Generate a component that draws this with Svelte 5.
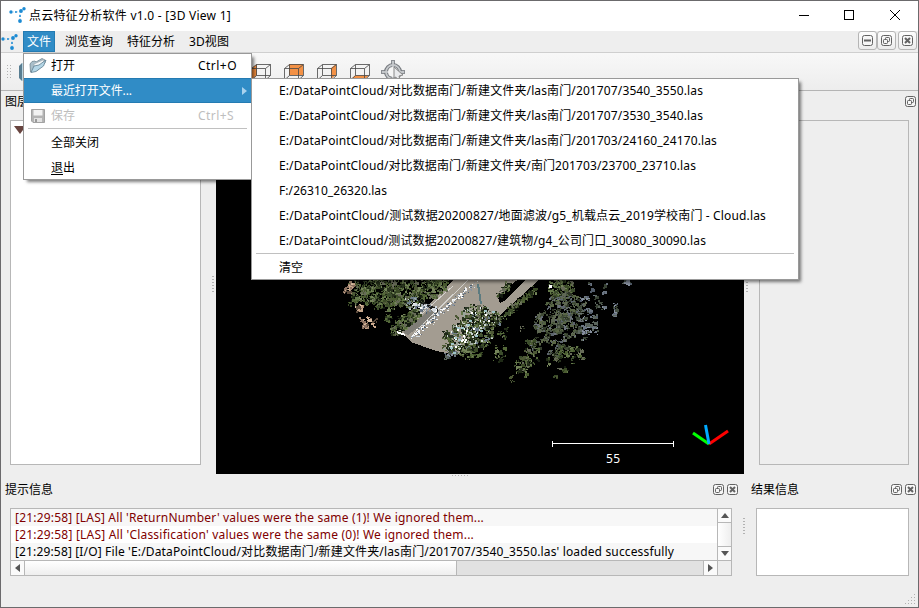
<script>
  const recent = [
    ['E:/DataPointCloud/对比数据南门/新建文件夹/las南门/201707/3540_3550.las', 424],
    ['E:/DataPointCloud/对比数据南门/新建文件夹/las南门/201707/3530_3540.las', 424],
    ['E:/DataPointCloud/对比数据南门/新建文件夹/las南门/201703/24160_24170.las', 438],
    ['E:/DataPointCloud/对比数据南门/新建文件夹/南门201703/23700_23710.las', 417],
    ['F:/26310_26320.las', 108],
    ['E:/DataPointCloud/测试数据20200827/地面滤波/g5_机载点云_2019学校南门 - Cloud.las', 487],
    ['E:/DataPointCloud/测试数据20200827/建筑物/g4_公司门口_30080_30090.las', 427]
  ];
  const logs = [
    ["[21:29:58] [LAS] All 'ReturnNumber' values were the same (1)! We ignored them...", 469, true],
    ["[21:29:58] [LAS] All 'Classification' values were the same (0)! We ignored them...", 459, true],
    ["[21:29:58] [I/O] File 'E:/DataPointCloud/对比数据南门/新建文件夹/las南门/201707/3540_3550.las' loaded successfully", 659, false]
  ];

  // Spreads a label's letters so that it takes the given width.
  function fit(node, width) {
    const n = [...node.textContent].length;
    const w = node.getBoundingClientRect().width;
    node.style.letterSpacing = (width - w) / n + 'px';
  }

  let seed = 41;
  const rnd = () => ((seed = (seed * 16807) % 2147483647) / 2147483647);
  const leaf = ['#3a4a26', '#4a5c30', '#55693a', '#1f2a16', '#64784a', '#28331d', '#74845a', '#3c4d2c', '#141c10', '#666a58', '#4d5836'];
  const town = [...leaf, '#9aa59a', '#c9d3cf', '#6f7f8c', '#2a3526', '#11180e'];
  const dusty = ['#414c36', '#505f40', '#5f6854', '#5c646c', '#333c2c', '#485148', '#5a6646', '#6c727a', '#424e38', '#2c3424'];
  const bluish = ['#525c6a', '#6c7682', '#444e42', '#5b655d', '#868f9e', '#384234'];
  const tan = ['#c9a88c', '#a88b74', '#dcc0a4', '#8a7060', '#5a4a3c'];
  const cars = ['#ffffff', '#f2f4f6', '#8a94a0', '#667280', '#d5dbe0', '#a0a8ae', '#4f6070'];
  // cx, cy, rx, ry, tilt, tuft count, palette
  const clumps = [
    [372, 289, 24, 15, 0, 95, leaf], [348, 286, 4, 7, 0.4, 14, tan],
    [386, 300, 18, 9, 0, 45, leaf], [400, 289, 20, 12, 0, 70, leaf],
    [430, 285, 19, 12, -0.35, 90, leaf], [408, 301, 17, 6, 0.2, 36, town],
    [358, 307, 2, 7, 0, 9, tan], [366, 321, 9, 4, 0, 11, tan],
    [387, 318, 3, 5, 0.5, 5, leaf], [352, 299, 6, 4, 0, 9, leaf],
    [404, 321, 18, 6, -0.7, 65, leaf], [424, 306, 12, 3, 0.3, 12, cars],
    [472, 315, 16, 11, 0, 70, town], [459, 337, 19, 14, -0.5, 90, town],
    [478, 333, 17, 14, -0.8, 75, town], [488, 320, 13, 8, -0.7, 40, town],
    [470, 352, 12, 5, 0, 20, leaf], [450, 354, 6, 3, 0, 9, bluish],
    [515, 304, 25, 2, -0.72, 45, leaf], [504, 288, 9, 2, -0.8, 14, leaf],
    [559, 287, 13, 11, 0, 60, leaf], [564, 303, 20, 11, 0.2, 65, dusty],
    [550, 322, 18, 12, 0, 65, dusty], [568, 323, 14, 14, 0, 35, dusty],
    [550, 345, 21, 10, 0.2, 38, dusty], [567, 352, 14, 9, 0, 16, leaf],
    [585, 324, 15, 14, 0, 22, bluish], [590, 307, 13, 12, 0, 17, bluish],
    [530, 346, 6, 7, 0, 13, leaf], [521, 364, 7, 8, 0, 22, leaf],
    [540, 358, 20, 6, 0, 12, leaf], [508, 332, 14, 9, 0, 6, leaf],
    [495, 353, 12, 9, 0, 7, leaf], [614, 309, 1, 8, 0, 7, bluish],
    [626, 281, 4, 3, 0, 7, bluish], [575, 352, 12, 6, 0, 7, leaf],
    [525, 376, 30, 4, 0, 4, leaf], [560, 369, 5, 2, 0, 3, leaf],
    [596, 288, 14, 8, 0, 4, bluish]
  ];
  const cells = [];
  const pick = (list) => list[Math.floor(rnd() * list.length)];
  for (const [cx, cy, rx, ry, tilt, count, palette] of clumps) {
    for (let i = 0; i < count; i++) {
      const a = rnd() * Math.PI * 2;
      const r = Math.sqrt(rnd());
      const u = Math.cos(a) * r * rx;
      const v = Math.sin(a) * r * ry;
      const x = cx + u * Math.cos(tilt) - v * Math.sin(tilt);
      const y = cy + u * Math.sin(tilt) + v * Math.cos(tilt);
      const main = pick(palette);
      const size = 2 + Math.floor(rnd() * 3);
      // Each tuft is a small patch of one tone with flecks of the others.
      cells.push({ x: Math.round(x), y: Math.round(y), w: size, h: size - 1, c: main });
      for (let k = 0; k < 4; k++) {
        cells.push({
          x: Math.round(x + (rnd() - 0.4) * 5), y: Math.round(y + (rnd() - 0.4) * 5),
          w: 1 + Math.floor(rnd() * 2), h: 1 + Math.floor(rnd() * 2),
          c: rnd() > 0.5 ? main : pick(palette)
        });
      }
    }
  }
  // Bright specks where roofs and cars show between the trees.
  for (let i = 0; i < 40; i++) {
    const t = rnd();
    cells.push({ x: Math.round(446 + t * 40 + rnd() * 8), y: Math.round(342 - t * 30 + (rnd() - 0.5) * 24), w: 1 + (i % 3), h: 2, c: ['#e6f6f4', '#ffffff', '#9fc4c8'][i % 3] });
  }
  // Parked cars along the road.
  for (let i = 0; i < 150; i++) {
    const t = rnd();
    cells.push({ x: Math.round(409 + t * 63 + rnd() * 6), y: Math.round(333 - t * 53 + rnd() * 6), w: 1 + Math.floor(rnd() * 2), h: 1, c: cars[i % cars.length] });
  }
</script>

{#snippet logo()}
  <svg width="17" height="16" viewBox="0 0 17 16">
    <path d="M2 5L8 5L12 4L15 2M11 5V14" stroke="#b9daf0" stroke-width="1" stroke-dasharray="1 1" fill="none" />
    <g fill="#1b8ad3"><circle cx="2" cy="5" r="1.7" /><circle cx="7" cy="5" r="1" /><circle cx="12" cy="4" r="1.9" /><circle cx="15" cy="1.8" r="1.7" /><circle cx="11" cy="9" r="1" /><circle cx="11" cy="14" r="1.9" /></g>
  </svg>
{/snippet}

{#snippet glyph(kind)}
  <svg width="11" height="11" viewBox="0 0 11 11" fill="none" stroke="#626262">
    <rect x=".5" y=".5" width="10" height="10" rx="2" fill="#f6f6f6" />
    {#if kind === 'min'}
      <path d="M2 5.5H9" stroke-width="2" />
    {:else if kind === 'float'}
      <rect x="4.5" y="2.5" width="4" height="4" rx=".8" /><rect x="2.5" y="4.5" width="4" height="4" rx=".8" fill="#f6f6f6" />
    {:else}
      <path d="M3 3L8 8M8 3L3 8" stroke-width="2" />
    {/if}
  </svg>
{/snippet}

{#snippet cube(face)}
  <svg width="20" height="17" viewBox="0 0 20 17">
    {#if face === 'left'}<path d="M1 5L6 1V12L1 16Z" fill="#ec8a3c" />{/if}
    {#if face === 'back'}<path d="M5 1H19V12H5Z" fill="#f39145" />{/if}
    {#if face === 'right'}<path d="M14 5L19 1V12L14 16Z" fill="#f39145" />{/if}
    {#if face === 'bottom'}<path d="M1 16L5 12.5H19L15 16Z" fill="#f39145" />{/if}
    <path d="M.5 5.5H14.5V17M.5 5.5V17M.5 5.5L5.5 1.5H19.5L14.5 5.5M5.5 1.5V12.5H19.5V1.5M5.5 12.5L.5 17M19.5 12.5L14.5 17" fill="none" stroke="#464646" stroke-width=".8" />
  </svg>
{/snippet}

<div class="window">
  <header class="title">
    {@render logo()}
    <span class="name"><span use:fit={202}>点云特征分析软件 v1.0 - [3D View 1]</span></span>
    <svg class="controls" width="106" height="12" viewBox="0 0 106 12" fill="none" stroke="#000">
      <path d="M0 6.5H10" /><rect x="45.5" y="1.5" width="9" height="9" /><path d="M91 1L101 11M101 1L91 11" />
    </svg>
  </header>

  <nav class="menubar">
    <div class="sublogo">{@render logo()}</div>
    <span class="entry open">文件</span><span class="entry">浏览查询</span><span class="entry">特征分析</span><span class="entry"><span use:fit={40}>3D视图</span></span>
    <div class="mdi">
      <button>{@render glyph('min')}</button><button>{@render glyph('float')}</button><button class="last">{@render glyph('close')}</button>
    </div>
  </nav>

  <div class="toolbar">
    <i class="grip"></i>
    <svg class="folder" width="20" height="20" viewBox="0 0 20 20"><path d="M1 4L4 1V19L1 16Z" fill="#587d91" /><path d="M4 1H20V19H4Z" fill="#b8d3df" /></svg>
    <div class="cubes">
      {@render cube('left')}{@render cube('back')}{@render cube('right')}{@render cube('bottom')}
      <svg width="24" height="22" viewBox="0 0 24 22" fill="none">
        <path d="M12 0V22M0 12H24" stroke="#8b8e93" stroke-width="4" /><circle cx="12" cy="12" r="7" stroke="#73777c" stroke-width="4" />
        <path d="M12 1V21M1 12H23" stroke="#d8dadd" stroke-width="1.5" /><circle cx="12" cy="12" r="7" stroke="#c6c9cc" stroke-width="1.8" /><circle cx="12" cy="12" r="5" fill="#f5f5f5" />
        <path d="M13 7L22 15L18 16L19 20H16L15 17L13 18Z" fill="#e9eaec" stroke="#888" />
      </svg>
    </div>
  </div>

  <div class="main">
    <section class="left">
      <div class="cap">图层</div>
      <div class="tree"><svg width="12" height="9" viewBox="0 0 12 9"><path d="M0 0H12L6 8Z" fill="#68443f" /></svg></div>
    </section>
    <i class="split"></i>
    <svg class="view" width="528" height="382" viewBox="216 92 528 382">
      <rect x="216" y="92" width="528" height="382" fill="#000" />
      <g shape-rendering="crispEdges">
        <path d="M456 278L401 332L411 342L436 351L458 355L486 322L514 292L534 278Z" fill="#a39c91" />
        <path d="M434 306L403 332L408 335L440 312Z" fill="#807e78" />
        <path d="M498 297L512 284L520 278H531L514 296L500 303Z" fill="#000" />
        <path d="M541 278H528L492 313L499 316Z" fill="#a29c91" />
        <path d="M453 286L407 327M468 280L414 333M424 310L398 332" stroke="#d4d3cf" fill="none" />
        <path d="M467 289L436 316L411 338" stroke="#f5f5f5" stroke-width="2" stroke-dasharray="5 2" fill="none" />
        <path d="M478 284L481 304" stroke="#5c7b80" stroke-width="2" />
        <path d="M419 301L438 311" stroke="#1a1a18" stroke-width="3" />
        {#each cells as p}<rect x={p.x} y={p.y} width={p.w} height={p.h} fill={p.c} />{/each}
        <path d="M397 331L405 334V336L397 333Z" fill="#fff" /><rect x="549" y="285" width="3" height="3" fill="#fff" />
        <path d="M552.5 441V447M673.5 441V447M552 443.500H674" stroke="#fff" />
      </g>
      <text x="606" y="463" textLength="14" fill="#fff" font-size="12">55</text>
      <g fill="none" stroke-width="3"><path d="M693 433L709 444" stroke="#0f0" /><path d="M709 444L728 431" stroke="#f00" /><path d="M705.500 425L709 444" stroke="#0af" /></g>
    </svg>
    <i class="split"></i>
    <section class="right">
      <div class="cap"><span class="icons">{@render glyph('float')}</span></div>
      <div class="panel"></div>
    </section>
  </div>

  <i class="hsplit"></i>

  <div class="bottom">
    <section class="tips">
      <div class="cap">提示信息<span class="icons">{@render glyph('float')}{@render glyph('close')}</span></div>
      <div class="console">
        <div class="body">
          <div class="lines">
            {#each logs as [text, w, warn]}<div class="line" class:warn><span use:fit={w}>{text}</span></div>{/each}
          </div>
          <div class="vbar">
            <b><svg width="8" height="5"><path d="M4 0L8 5H0Z" fill="#555" /></svg></b><b class="thumb"></b><b><svg width="8" height="5"><path d="M0 0H8L4 5Z" fill="#555" /></svg></b>
          </div>
        </div>
        <div class="hbar">
          <b><svg width="5" height="8"><path d="M5 0V8L0 4Z" fill="#555" /></svg></b><b class="thumb"></b><b class="track"></b><b><svg width="5" height="8"><path d="M0 0V8L5 4Z" fill="#555" /></svg></b><b class="corner"></b>
        </div>
      </div>
    </section>
    <i class="split"></i>
    <section class="result">
      <div class="cap">结果信息<span class="icons">{@render glyph('float')}{@render glyph('close')}</span></div>
      <div class="box"></div>
    </section>
  </div>
  <svg class="sizegrip" width="11" height="11"><g fill="#b0b0b0">{#each [0, 1, 2, 3] as r}{#each [0, 1, 2, 3] as c}{#if r + c > 2}<rect x={c * 3} y={r * 3} width="1" height="1" />{/if}{/each}{/each}</g></svg>

  <div class="menu file">
    <div class="item">
      <svg width="18" height="18" viewBox="0 0 18 18"><path d="M1.500 15L1 7L3 4.500L6 4L7 5L13 1.500L16 3V6L9 13Z" fill="#a9bfca" stroke="#71858f" stroke-width=".8" /><path d="M5 7L15 2.500L14 7L5 13Z" fill="#f4f7f8" stroke="#9aa5aa" stroke-width=".6" /><path d="M2 15.500L5 9L10 8L17 3L14.500 9L7 14.500Z" fill="#b4d6e6" stroke="#5f7f90" stroke-width=".8" /></svg>
      <span>打开</span><em><span use:fit={39}>Ctrl+O</span></em>
    </div>
    <div class="item hot"><span use:fit={81}>最近打开文件...</span><svg class="arrow" width="5" height="8"><path d="M0 0L5 4L0 8Z" fill="#a9d2ee" /></svg></div>
    <div class="item off">
      <svg width="18" height="18" viewBox="0 0 18 18"><path d="M2.500 2.500H15.500V15.500H4L2.500 14Z" fill="#b4b4b4" stroke="#a2a2a2" /><path d="M4.500 3H13.500V8.500H4.500Z" fill="#f2f2f2" /><path d="M5 11H13V15H5Z" fill="#e2e2e2" /><path d="M6 12H8V15H6Z" fill="#999" /></svg>
      <span>保存</span><em><span use:fit={36}>Ctrl+S</span></em>
    </div>
    <hr />
    <div class="item"><span>全部关闭</span></div>
    <div class="item"><span><u>退</u>出</span></div>
  </div>

  <div class="menu recent">
    {#each recent as [path, w]}<div class="item"><span use:fit={w}>{path}</span></div>{/each}
    <hr />
    <div class="item"><span>清空</span></div>
  </div>
</div>

<style>
  :global(body) { margin: 0; }
  .window, .window * { box-sizing: border-box; }
  .window { position: relative; width: 919px; height: 608px; border: 1px solid #6b6a6c; background: #eee; display: flex; flex-direction: column; overflow: hidden; font: 12px/16px "Noto Sans", "Noto Sans CJK SC", sans-serif; color: #000; white-space: nowrap; }
  svg { display: block; flex: none; }
  .title { height: 30px; flex: none; background: #fff; display: flex; align-items: center; padding: 0 13px 2px 8px; }
  .name { margin-left: 3px; padding-top: 2px; }
  .controls { margin-left: auto; }
  .menubar { height: 22px; flex: none; display: flex; border-bottom: 1px solid #cfcfcf; }
  .sublogo { width: 22px; height: 21px; display: flex; align-items: center; overflow: hidden; }
  .entry { height: 21px; line-height: 21px; padding: 0 4px; margin-right: 6px; }
  .open { background: #308cc6; color: #fff; border: 1px solid #247bb2; line-height: 19px; padding: 0 3px; }
  .mdi { margin-left: auto; display: flex; padding-right: 1px; }
  button { width: 19px; height: 19px; padding: 0; display: grid; place-items: center; border: 1px solid #b5b5b5; border-radius: 3px; background: linear-gradient(#fdfdfd, #ececec); }
  .last { margin-left: 2px; }
  .toolbar { height: 38px; flex: none; display: flex; align-items: center; background: linear-gradient(#f8f8f8, #ededed); border-bottom: 1px solid #b4b4b4; padding-left: 5px; }
  .grip { width: 5px; height: 16px; background: radial-gradient(circle, #b2b2b2 .8px, transparent 1px) 0 0 / 3px 3px; }
  .folder { margin-left: 7px; }
  .cubes { display: flex; gap: 13px; margin: 0 0 1px 213px; align-items: center; }
  .cubes > :global(svg:last-child) { margin-left: -2px; }
  .main { height: 383px; flex: none; display: flex; padding-top: 1px; }
  .left { width: 209px; padding: 0 9px 9px; display: flex; flex-direction: column; }
  .cap { height: 28px; flex: none; line-height: 19px; display: flex; margin-left: -5px; }
  .tree { flex: 1; border: 1px solid #b7b7b7; background: #fff; padding: 5px 3px; }
  .split { width: 6px; flex: none; align-self: center; height: 17px; background: radial-gradient(circle, #b2b2b2 .7px, transparent 1px) 0 0 / 6px 3px; }
  .right { flex: 1; padding: 0 9px 9px; display: flex; flex-direction: column; }
  .right .cap { margin-right: -7px; }
  .icons { margin-left: auto; display: flex; gap: 3px; padding-top: 4px; }
  .panel { flex: 1; border: 1px solid #b7b7b7; }
  .hsplit { height: 5px; width: 18px; flex: none; margin-left: 450px; background: radial-gradient(circle, #b2b2b2 .7px, transparent 1px) 0 -1px / 3px 5px; }
  .bottom { display: flex; height: 97px; flex: none; }
  .tips { width: 740px; padding: 0 9px; }
  .bottom .cap { height: 29px; line-height: 22px; }
  .bottom .icons { padding-top: 5px; }
  .tips .cap { margin-right: -8px; }
  .console { width: 722px; border: 1px solid #b7b7b7; }
  .body { display: flex; height: 51px; }
  .lines { flex: 1; min-width: 0; overflow: hidden; }
  .line { height: 17px; line-height: 17px; background: #f7f7f7; padding-left: 4px; }
  .line:nth-child(2) { background: #fff; }
  .warn { color: #800000; }
  .vbar { width: 14px; border-left: 1px solid #b7b7b7; display: flex; flex-direction: column; }
  b { display: grid; place-items: center; background: #fafafa; height: 13px; }
  .vbar .thumb { flex: 1; border: solid #b7b7b7; border-width: 1px 0; background: linear-gradient(90deg, #fff, #eee); }
  .hbar { display: flex; border-top: 1px solid #b7b7b7; height: 15px; }
  .hbar b { width: 14px; height: 14px; border-right: 1px solid #b7b7b7; }
  .hbar .thumb { width: 432px; background: linear-gradient(#fff, #eee); }
  .hbar .track { flex: 1; background: #e1e1e1; }
  .hbar .corner { background: #eee; border-right: 0; width: 13px; }
  .bottom .split { margin-top: -5px; }
  .tips .icons { margin-right: 2px; }
  .result { flex: 1; padding: 0 9px; }
  .result .cap { margin-right: -7px; }
  .box { height: 68px; border: 1px solid #b7b7b7; background: #fff; }
  .sizegrip { position: absolute; right: 2px; bottom: 2px; }
  .menu { position: absolute; background: #fff; border: 1px solid #999; box-shadow: 3px 3px 3px -1px rgba(0, 0, 0, .5); }
  .file { left: 22px; top: 52px; width: 229px; height: 127px; }
  .recent { left: 250px; top: 77px; width: 548px; height: 202px; }
  .item { height: 25px; display: flex; align-items: center; padding: 0 14px 0 27px; }
  .menu > .item:first-child { height: 24px; }
  .recent > .item:first-child { padding-bottom: 1px; }
  .item > svg:first-child { width: 18px; margin: 0 4px 0 -22px; }
  .item em { font-style: normal; margin-left: auto; width: 39px; }
  .hot { background: #308cc6; color: #fff; border: solid #247bb2; border-width: 1px 0; }
  .arrow { margin: 0 -10px 0 auto; }
  .off { color: #bebebe; }
  hr { margin: 0 4px; border: 0; border-top: 1px solid #c0c0c0; }
  hr + .item { margin-top: 1px; }
  u { text-underline-offset: 2px; }
</style>
